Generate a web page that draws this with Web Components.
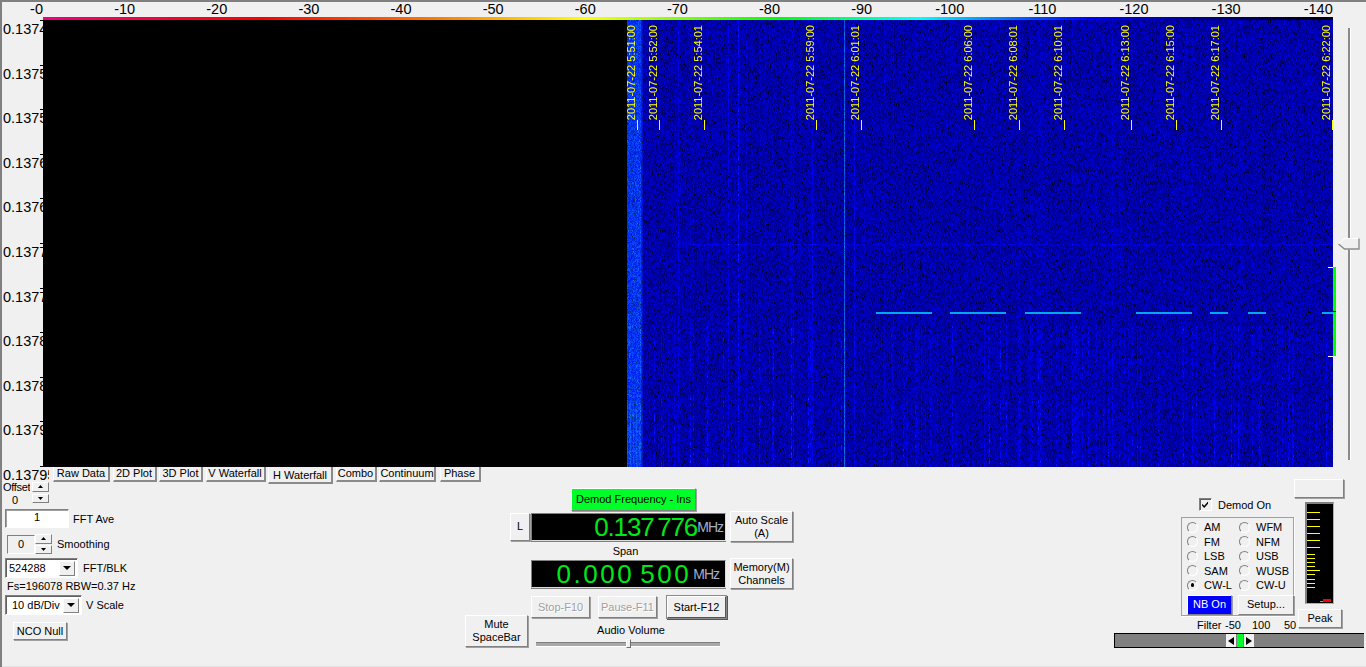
<!DOCTYPE html>
<html>
<head>
<meta charset="utf-8">
<title>Spectrum</title>
<style>
  html, body { margin: 0; padding: 0; background: #f0f0f0; overflow: hidden; }
  body { font: 11px "Liberation Sans", Arial, sans-serif; color: #000; }
</style>
</head>
<body>
<sdr-app>
  <sdr-plot>
    <sdr-stamp at="637">2011-07-22 5:51:00</sdr-stamp>
    <sdr-stamp at="659">2011-07-22 5:52:00</sdr-stamp>
    <sdr-stamp at="704">2011-07-22 5:54:01</sdr-stamp>
    <sdr-stamp at="816">2011-07-22 5:59:00</sdr-stamp>
    <sdr-stamp at="861">2011-07-22 6:01:01</sdr-stamp>
    <sdr-stamp at="974">2011-07-22 6:06:00</sdr-stamp>
    <sdr-stamp at="1019">2011-07-22 6:08:01</sdr-stamp>
    <sdr-stamp at="1064">2011-07-22 6:10:01</sdr-stamp>
    <sdr-stamp at="1131">2011-07-22 6:13:00</sdr-stamp>
    <sdr-stamp at="1176">2011-07-22 6:15:00</sdr-stamp>
    <sdr-stamp at="1221">2011-07-22 6:17:01</sdr-stamp>
    <sdr-stamp at="1332">2011-07-22 6:22:00</sdr-stamp>
  </sdr-plot>
  <sdr-panel>
    <sdr-left>
      <sdr-tabs>
        <sdr-tab style="width:57px">Raw Data</sdr-tab>
        <sdr-tab style="width:44px">2D Plot</sdr-tab>
        <sdr-tab style="width:44px">3D Plot</sdr-tab>
        <sdr-tab style="width:60px">V Waterfall</sdr-tab>
        <sdr-tab style="width:65px" active>H Waterfall</sdr-tab>
        <sdr-tab style="width:41px">Combo</sdr-tab>
        <sdr-tab style="width:57px">Continuum</sdr-tab>
        <sdr-tab style="width:41px;margin-left:1px">Phase</sdr-tab>
      </sdr-tabs>
    </sdr-left>
    <sdr-center></sdr-center>
    <sdr-right></sdr-right>
  </sdr-panel>
</sdr-app>
<script>
const ui = `
  * { box-sizing: border-box; }
  :host { box-sizing: border-box; font: 11px "Liberation Sans", Arial, sans-serif; color: #000; }
`;

class Part extends HTMLElement {
  constructor() {
    super();
    this._root = this.attachShadow({mode: "open"});
    this._root.innerHTML = `<style>${ui}${this.css()}</style>${this.html()}`;
  }
  css() { return ""; }
  html() { return "<slot></slot>"; }
}

class SdrApp extends Part {
  css() { return `
    :host { display: flex; flex-direction: column; width: 1366px; height: 667px;
      box-shadow: inset 2px 2px #808080, inset 0 -1px #e2e2e2; }
  `; }
}

class SdrPlot extends Part {
  css() { return `
    :host { display: grid; grid-template-columns: 43px 1290px 33px; grid-template-rows: 17px 3px 447px; height: 467px; flex: none; }
    .freq { grid-column: 1 / 4; display: flex; font-size: 14.5px; line-height: 17px; padding-top: 1px; }
    .freq span { flex: none; width: 92.14px; text-align: right; }
    .freq span:first-child { width: 43px; }
    .bar { grid-column: 2; grid-row: 2; position: relative; z-index: 2;
      background: linear-gradient(90deg, #f0007f 0, #ff0000 17%, #ff8000 31%, #ffff00 42%, #00ff00 57%, #00ffff 68%, #0080ff 74%, #0000ff 81%, #000 100%); }
    .ylab { grid-column: 1; grid-row: 3; display: flex; flex-direction: column; width: 49px; height: 447px; font-size: 14.5px; }
    .ylab span { flex: none; display: block; height: 44.6px; width: 49px; overflow: hidden; white-space: nowrap; padding: 1px 0 0 3px; line-height: 16px;
      background: linear-gradient(#000, #000) 40px 0 / 3px 1px no-repeat; }
    sdr-waterfall { grid-column: 2; grid-row: 3; position: relative; z-index: 1; }
    sdr-level { grid-column: 3; grid-row: 2 / 4; }
  `; }
  html() {
    let freq = "";
    for (let i = 0; i <= 14; i++) freq += `<span>-${i * 10}</span>`;
    let lab = "";
    for (let v = 13745; v <= 13795; v += 5) lab += `<span>0.${v}</span>`;
    return `<div class="freq">${freq}</div><div class="bar"></div><div class="ylab">${lab}</div>
      <sdr-waterfall><slot></slot></sdr-waterfall><sdr-level></sdr-level>`;
  }
}

class SdrWaterfall extends Part {
  css() { return `
    :host { display: block; width: 1290px; height: 447px; background: #000; overflow: hidden; }
    canvas { display: block; }
  `; }
  html() { return `<canvas width="1290" height="447"></canvas><slot></slot>`; }
  connectedCallback() {
    const c = this._root.querySelector("canvas").getContext("2d");
    c.fillStyle = "#000";
    c.fillRect(0, 0, 1290, 447);
    const img = c.getImageData(0, 0, 1290, 447);
    const d = img.data;
    let seed = 20110722;
    const rnd = () => { seed = (seed * 1664525 + 1013904223) >>> 0; return (seed >>> 8) / 16777216; };

    // per column burst level, broad bands and fixed lines (x in page pixels)
    const col = {}, dash = {};
    for (let x = 627; x < 1333; x++) {
      col[x] = (rnd() - 0.5) * 16;
      dash[x] = rnd() < 0.2 ? 25 + rnd() * 55 : 0;
    }
    for (let x = 789; x < 794; x++) col[x] += 26;
    for (const [x, v] of [[678, 50], [693, 20], [728, 60], [738, 70], [746, 25], [765, 18], [812, 60], [854, 55], [884, 25], [893, 20], [1003, 25], [1018, 18], [1042, 24], [1112, 28], [1120, 20], [1186, 20], [1240, 15]]) col[x] += v;

    const rowLevel = y => {
      if (y > 400) return 1;
      if (y > 378 && y < 395) return 0.2;
      if (y > 325) return 0.85;
      return 0.15;
    };

    let row = null;
    for (let y = 0; y < 447; y++) {
      if (y % 3 !== 1 || !row) {
        row = [];
        for (let x = 627; x < 1333; x++) row.push(178 + 62 * Math.log10(-Math.log(rnd() * 0.9995 + 0.0001)));
      }
      const py = y + 20, lvl = rowLevel(py);
      const faint = Math.abs(py - 244) < 1 ? 45 : 0;
      for (let x = 627; x < 1333; x++) {
        let v = row[x - 627] + col[x] + dash[x] * lvl * (Math.sin(py / 2 + x) > -0.5 ? 1 : 0.3);
        if (faint && x > 680) v += faint;
        let g = 0;
        if (x < 643) {
          const edge = x < 640 ? 1 : (643 - x) / 3;
          v += 75 * edge;
          g = edge * (25 + rnd() * 45 + (py > 400 && x % 3 === 0 ? 25 : 0));
        }
        if (x === 844) { v = 205 + rnd() * 40; g = 60 + rnd() * 70; }
        if (v > 255) { g += (v - 255) * 1.1; v = 255; }
        const i = (y * 1290 + x - 43) * 4;
        d[i] = g > 55 ? 10 : 0; d[i + 1] = g; d[i + 2] = Math.max(8, v); d[i + 3] = 255;
      }
    }
    c.putImageData(img, 0, 0);

    // carrier keyed on and off
    c.fillStyle = "#00a8f0";
    for (const [a, b] of [[876, 932], [950, 1006], [1025, 1081], [1136, 1192], [1210, 1228], [1248, 1266], [1322, 1333]]) {
      c.fillRect(a - 43, 312 - 20, b - a, 2);
    }
  }
}

class SdrStamp extends Part {
  css() { return `
    :host { position: absolute; top: 0; width: 13px; height: 110px; display: flex; flex-direction: column; align-items: flex-end; justify-content: flex-end; color: #ffff00; font-size: 11px; }
    .t { writing-mode: vertical-rl; transform: rotate(180deg); white-space: nowrap; line-height: 11px; width: 11px; margin-right: 1px; }
    .k { width: 1px; height: 10px; background: #ffff00; flex: none; }
  `; }
  html() { return `<div class="t"><slot></slot></div><div class="k"></div>`; }
  connectedCallback() { this.style.left = (this.getAttribute("at") - 43 - 12) + "px"; }
}

class SdrLevel extends Part {
  css() { return `
    :host { display: block; position: relative; }
    .track { position: absolute; left: 15px; top: 11px; bottom: 7px; width: 4px; background: linear-gradient(90deg, #8a8a8a 0 2px, #fff 2px 3px, transparent 3px); }
    .thumb { position: absolute; left: 5px; top: 221px; }
    .sig { position: absolute; left: 0; top: 250px; width: 3px; height: 89px; background: #00ff00; }
    .sig::after { content: ""; position: absolute; left: 0; top: 44px; width: 3px; height: 1px; background: #003000; }
    .mark { position: absolute; left: -5px; width: 5px; height: 1px; background: #fff; z-index: 3; }
  `; }
  html() { return `
    <div class="track"></div>
    <svg class="thumb" width="22" height="12" viewBox="0 0 22 12">
      <path d="M.5 6 L6.5 .5 H21 V11 H6.5 Z" fill="#f0f0f0" stroke="#fff"/>
      <path d="M.5 6 L6.5 11 H21 V.5" fill="none" stroke="#8a8a8a" stroke-width="1.4"/>
    </svg>
    <div class="sig"></div>
    <div class="mark" style="top:250px"></div>
    <div class="mark" style="top:339px"></div>`; }
}

class SdrPanel extends Part {
  css() { return `:host { display: flex; height: 200px; flex: none; }`; }
}

class SdrTabs extends Part {
  css() { return `:host { display: flex; height: 17px; margin: 0 0 -3px 53px; gap: 2.5px; align-items: flex-start; }`; }
}

class SdrTab extends Part {
  css() { return `
    :host { display: flex; justify-content: center; flex: none; height: 15px; line-height: 13px; background: #f0f0f0;
      border-left: 1px solid #fff; border-right: 2px solid #8a8a8a; border-bottom: 2px solid #8a8a8a; white-space: nowrap; }
    :host([active]) { height: 17px; line-height: 17px; }
  `; }
}

class SdrButton extends Part {
  css() { return `
    :host { display: inline-flex; align-items: center; justify-content: center; flex: none; text-align: center; line-height: 13px; white-space: nowrap;
      background: #f0f0f0; border: 1px solid; border-color: #fff #808080 #808080 #fff; box-shadow: 1px 1px #a0a0a0; }
    :host([disabled]) { color: #a0a0a0; text-shadow: 1px 1px #fff; }
    :host([focus]) { border-color: #fff #555 #555 #fff; box-shadow: 0 0 0 1px #8a8a8a, 1px 1px 0 1px #555; }
  `; }
}

class SdrSpin extends Part {
  css() { return `
    :host { display: flex; flex-direction: column; justify-content: space-between; flex: none; width: 17px; }
    div { height: 9.5px; background: #f0f0f0; border: 1px solid; border-color: #fff #808080 #808080 #fff; display: flex; align-items: center; justify-content: center; }
  `; }
  html() { return `
    <div><svg width="5" height="3"><path d="M2.5 0 L5 3 H0Z"/></svg></div>
    <div><svg width="5" height="3"><path d="M0 0 H5 L2.5 3Z"/></svg></div>`; }
}

class SdrCombo extends Part {
  css() { return `
    :host { display: flex; flex: none; height: 20px; background: #fff; border: 1px solid; border-color: #808080 #fff #fff #808080; box-shadow: inset 1px 1px #606060; padding: 2px 2px 2px 3px; align-items: center; justify-content: space-between; }
    .a { width: 16px; height: 15px; background: #f0f0f0; border: 1px solid; border-color: #fff #808080 #808080 #fff; display: flex; align-items: center; justify-content: center; flex: none; }
    span { white-space: nowrap; }
  `; }
  html() { return `<span><slot></slot></span><div class="a"><svg width="8" height="4"><path d="M0 0 H8 L4 4Z"/></svg></div>`; }
}

class SdrReadout extends Part {
  css() { return `
    :host { display: flex; align-items: center; justify-content: flex-end; flex: none; width: 195px; height: 28px; background: #000;
      border: 1px solid; border-color: #808080 #dcdcdc #dcdcdc #808080; box-shadow: 0 1px #808080; overflow: hidden; }
    .n { color: #00e81c; font-size: 26px; white-space: nowrap; line-height: 26px; }
    .u { color: #a5aec8; font-size: 14px; white-space: nowrap; letter-spacing: -1px; word-spacing: 0; }
  `; }
  html() { return `<span class="n"><slot></slot></span><span class="u">MHz</span>`; }
}

class SdrRadio extends Part {
  css() { return `
    :host { display: flex; align-items: center; gap: 6px; height: 14.5px; white-space: nowrap; }
    i { display: block; position: relative; width: 11px; height: 11px; border-radius: 50%; background: #f0f0f0; border: 1.5px solid; border-color: #808080 #fff #fff #808080; flex: none; }
    :host([checked]) i::after { content: ""; position: absolute; left: 2.5px; top: 2.5px; width: 3.5px; height: 3.5px; background: #000; border-radius: 50%; }
  `; }
  html() { return `<i></i><span><slot></slot></span>`; }
}

class SdrMeter extends Part {
  css() { return `
    :host { display: block; position: relative; flex: none; width: 29px; height: 102px; background: #000; border: 1px solid; border-color: #808080 #b0b0b0 #b0b0b0 #808080; box-shadow: inset 1px 1px #808080; }
    i { position: absolute; left: 1px; height: 1px; background: #ffff00; }
    .r { position: absolute; left: 17px; top: 96px; width: 8px; height: 3px; background: #ff0000; }
    .c { position: absolute; left: 14px; top: 98px; width: 3px; height: 1px; background: #00e0e0; }
  `; }
  html() {
    let t = "";
    for (const y of [512, 519, 526, 533, 540, 547, 570]) t += `<i style="top:${y - 503}px;width:13px"></i>`;
    for (const y of [554, 558, 562, 566, 574, 579, 583, 587]) t += `<i style="top:${y - 503}px;width:8px"></i>`;
    return t + `<div class="r"></div><div class="c"></div>`;
  }
}

class SdrLeft extends Part {
  css() { return `
    :host { display: block; flex: none; width: 465px; }
    .row { display: flex; align-items: center; margin-left: 5px; white-space: nowrap; }
    .off { display: flex; margin-left: 3px; height: 23px; }
    .off .t { width: 29px; line-height: 13px; overflow: hidden; height: 26px; }
    .off .t div { width: 27px; overflow: hidden; white-space: nowrap; letter-spacing: -.3px; }
    .ave { margin-top: 5px; height: 19px; gap: 4px; }
    .box { height: 19px; width: 64px; background: #fff; border: 1px solid; border-color: #808080 #fff #fff #808080; text-align: center; line-height: 15px; box-shadow: inset 1px 1px #a0a0a0; }
    .smo { margin: 6px 0 0 7px; height: 20px; }
    .val { width: 28px; height: 19px; border: 1px solid; border-color: #808080 #fff #fff #808080; text-align: center; line-height: 17px; }
    .fs { margin-left: 7px; height: 17px; line-height: 16px; white-space: nowrap; }
    .nco { margin: 7px 0 0 13px; display: block; }
  `; }
  html() { return `
    <slot></slot>
    <div class="off">
      <div class="t"><div>Offset</div><div style="width:24px;text-align:center">0</div></div>
      <sdr-spin style="height:21px;margin-top:1px"></sdr-spin>
    </div>
    <div class="row ave"><div class="box">1</div><span>FFT Ave</span></div>
    <div class="row smo"><div class="val">0</div><sdr-spin style="height:20px"></sdr-spin><span style="margin-left:5px">Smoothing</span></div>
    <div class="row" style="margin-top:4px;height:20px;gap:5px"><sdr-combo style="width:73px">524288</sdr-combo><span>FFT/BLK</span></div>
    <div class="fs">Fs=196078 RBW=0.37 Hz</div>
    <div class="row" style="height:20px;gap:4px"><sdr-combo style="width:77px"><span style="margin-left:3px">10 dB/Div</span></sdr-combo><span>V Scale</span></div>
    <div class="nco"><sdr-button style="width:54px;height:18px">NCO Null</sdr-button></div>
  `; }
}

class SdrCenter extends Part {
  css() { return `
    :host { display: block; flex: none; width: 335px; }
    .demod { margin: 21px 0 0 106px; height: 23px; }
    .rowa { display: flex; align-items: center; height: 31px; margin-left: 45px; }
    .rowb { display: flex; align-items: center; height: 31px; margin-left: 66px; }
    .gap { width: 4px; flex: none; }
    .span { margin-left: 66px; width: 189px; height: 16px; line-height: 19px; text-align: center; }
    .low { display: flex; margin-top: 7px; }
    .mute { margin-top: 19px; flex: none; width: 66px; }
    .btns { display: flex; }
    .vol { text-align: center; width: 195px; height: 16px; line-height: 14px; margin: 5px 0 0 0; padding-left: 5px; }
    .slide { position: relative; margin-left: 5px; width: 184px; height: 10px; }
    .slide::before { content: ""; position: absolute; left: 0; right: 0; top: 3px; height: 3px; background: #a8a8a8; border-top: 1px solid #808080; border-bottom: 1px solid #fff; }
    .knob { position: absolute; left: 90px; top: 0; width: 5px; height: 9px; background: #f0f0f0; border: 1px solid; border-color: #fff #707070 #707070 #fff; }
  `; }
  html() { return `
    <div class="demod"><sdr-button style="width:125px;height:23px;background:#00ff28">Demod Frequency - Ins</sdr-button></div>
    <div class="rowa">
      <sdr-button style="width:20px;height:28px;margin-right:1px">L</sdr-button>
      <sdr-readout style="letter-spacing:-1.1px;word-spacing:-2.7px;padding-right:2px">0.137 776</sdr-readout><div class="gap"></div>
      <sdr-button style="width:63px;height:31px">Auto Scale<br>(A)</sdr-button>
    </div>
    <div class="span">Span</div>
    <div class="rowb">
      <sdr-readout style="letter-spacing:2.5px;word-spacing:-3.5px;padding-right:6px"><span style="margin-right:2px">0.000 500</span></sdr-readout><div class="gap"></div>
      <sdr-button style="width:63px;height:31px">Memory(M)<br>Channels</sdr-button>
    </div>
    <div class="low">
      <div class="mute"><sdr-button style="width:63px;height:32px">Mute<br>SpaceBar</sdr-button></div>
      <div>
        <div class="btns">
          <sdr-button disabled style="width:59px;height:22px;margin-right:8px">Stop-F10</sdr-button>
          <sdr-button disabled style="width:59px;height:22px;margin-right:10px">Pause-F11</sdr-button>
          <sdr-button focus style="width:59px;height:22px">Start-F12</sdr-button>
        </div>
        <div class="vol">Audio Volume</div>
        <div class="slide"><div class="knob"></div></div>
      </div>
    </div>
  `; }
}

class SdrRight extends Part {
  css() { return `
    :host { display: block; flex: none; width: 252px; margin-left: 314px; }
    .top { display: flex; height: 150px; }
    .modes { margin: 31px 0 0 67px; width: 113px; flex: none; }
    .on { display: flex; align-items: center; height: 13px; margin-left: 18px; gap: 6px; white-space: nowrap; }
    .chk { width: 13px; height: 13px; background: #f0f0f0; border: 1px solid; border-color: #808080 #fff #fff #808080; box-shadow: inset 1px 1px #606060; display: block; flex: none; }
    .grp { margin-top: 6px; height: 99px; border: 1px solid #a0a0a0; box-shadow: 1px 1px #fff; padding: 2px 0 0 5px; }
    .list { display: grid; grid-template-columns: 52px 52px; }
    .btns { display: flex; margin-top: 2px; gap: 6px; }
    .vu { margin: 12px 0 0 0; width: 72px; flex: none; }
    .vu .m { margin: 4px 0 0 11px; }
    .peak { margin: 5px 0 0 4px; }
    .filter { display: flex; height: 16px; line-height: 16px; margin-left: 83px; white-space: nowrap; }
    .filter span:nth-child(1) { width: 28px; }
    .filter span:nth-child(2) { width: 27px; }
    .filter span:nth-child(3) { width: 32px; }
    .bar { position: relative; height: 15px; width: 250px; background: #808080; border: 1px solid #000; border-width: 1px 0 1px 1px; }
    .ctl { position: absolute; left: 111px; top: 0; height: 13px; display: flex; gap: 1px; }
    .ctl div { width: 10px; background: #f0f0f0; display: flex; align-items: center; justify-content: center; }
    .ctl .g { width: 6px; background: #00ff28; }
  `; }
  html() { return `
    <div class="top">
      <div class="modes">
        <div class="on">
          <svg class="chk" viewBox="0 0 13 13"><path d="M2.5 5.5 L5 8 L9.5 3 V5.5 L5 10.5 L2.5 8Z"/></svg>
          <span>Demod On</span>
        </div>
        <div class="grp">
          <div class="list">
            <sdr-radio>AM</sdr-radio><sdr-radio>WFM</sdr-radio>
            <sdr-radio>FM</sdr-radio><sdr-radio>NFM</sdr-radio>
            <sdr-radio>LSB</sdr-radio><sdr-radio>USB</sdr-radio>
            <sdr-radio>SAM</sdr-radio><sdr-radio>WUSB</sdr-radio>
            <sdr-radio checked>CW-L</sdr-radio><sdr-radio>CW-U</sdr-radio>
          </div>
          <div class="btns">
            <sdr-button style="width:45px;height:20px;background:#0000ff;color:#fff">NB On</sdr-button>
            <sdr-button style="width:56px;height:20px">Setup...</sdr-button>
          </div>
        </div>
      </div>
      <div class="vu">
        <sdr-button style="width:50px;height:19px;display:flex"></sdr-button>
        <div class="m"><sdr-meter></sdr-meter></div>
        <div class="peak"><sdr-button style="width:44px;height:19px;display:flex">Peak</sdr-button></div>
      </div>
    </div>
    <div class="filter"><span>Filter</span><span>-50</span><span>100</span><span>50</span></div>
    <div class="bar">
      <div class="ctl">
        <div><svg width="6" height="8"><path d="M6 0 V8 L0 4Z"/></svg></div>
        <div class="g"></div>
        <div><svg width="6" height="8"><path d="M0 0 V8 L6 4Z"/></svg></div>
      </div>
    </div>
  `; }
}

customElements.define("sdr-app", SdrApp);
customElements.define("sdr-waterfall", SdrWaterfall);
customElements.define("sdr-stamp", SdrStamp);
customElements.define("sdr-level", SdrLevel);
customElements.define("sdr-plot", SdrPlot);
customElements.define("sdr-panel", SdrPanel);
customElements.define("sdr-tabs", SdrTabs);
customElements.define("sdr-tab", SdrTab);
customElements.define("sdr-button", SdrButton);
customElements.define("sdr-spin", SdrSpin);
customElements.define("sdr-combo", SdrCombo);
customElements.define("sdr-readout", SdrReadout);
customElements.define("sdr-radio", SdrRadio);
customElements.define("sdr-meter", SdrMeter);
customElements.define("sdr-left", SdrLeft);
customElements.define("sdr-center", SdrCenter);
customElements.define("sdr-right", SdrRight);
</script>
</body>
</html>
